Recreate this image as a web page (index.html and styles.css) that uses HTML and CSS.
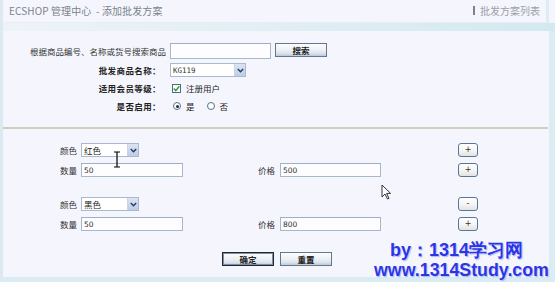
FILE: index.html
```html
<!DOCTYPE html>
<html lang="zh">
<head>
<meta charset="utf-8">
<title>ECSHOP 管理中心 - 添加批发方案</title>
<link rel="stylesheet" href="styles.css">
</head>
<body>
<div class="wrap">
  <div class="header">
    <span class="title">ECSHOP 管理中心&nbsp; - 添加批发方案</span>
    <span class="action"><i class="sep"></i>批发方案列表</span>
  </div>
  <div class="band"></div>
  <div class="main">
    <div class="form-top">
      <div class="lbl">根据商品编号、名称或货号搜索商品</div>
      <div class="ctl"><input class="txt search-input" type="text" value=""><button class="btn search">搜索</button></div>

      <div class="lbl b">批发商品名称：</div>
      <div class="ctl"><div class="sel w76"><span class="sel-val mono">KG119</span><span class="arr"><svg width="7" height="5" viewBox="0 0 7 5"><path d="M0.8 1 L3.5 3.8 L6.2 1" fill="none" stroke="#2a3a5a" stroke-width="1.4"/></svg></span></div></div>

      <div class="lbl b">适用会员等级：</div>
      <div class="ctl"><span class="chk"><svg width="7" height="7" viewBox="0 0 7 7"><path d="M0.8 3.6 L2.8 5.6 L6.3 1.2" fill="none" stroke="#21a021" stroke-width="1.4"/></svg></span><span class="opt">注册用户</span></div>

      <div class="lbl b">是否启用：</div>
      <div class="ctl"><span class="radio on"></span><span class="opt">是</span><span class="radio"></span><span class="opt">否</span></div>
    </div>

    <div class="divider"></div>

    <div class="group">
      <div class="row">
        <span class="flbl">颜色</span>
        <div class="sel w58"><span class="sel-val">红色</span><span class="arr"><svg width="7" height="5" viewBox="0 0 7 5"><path d="M0.8 1 L3.5 3.8 L6.2 1" fill="none" stroke="#2a3a5a" stroke-width="1.4"/></svg></span></div>
        <button class="mini c7">+</button>
      </div>
      <div class="row">
        <span class="flbl">数量</span>
        <input class="txt field" type="text" value="50">
        <span class="flbl c4">价格</span>
        <input class="txt field c5" type="text" value="500">
        <button class="mini c7">+</button>
      </div>
    </div>

    <div class="group">
      <div class="row">
        <span class="flbl">颜色</span>
        <div class="sel w58"><span class="sel-val">黑色</span><span class="arr"><svg width="7" height="5" viewBox="0 0 7 5"><path d="M0.8 1 L3.5 3.8 L6.2 1" fill="none" stroke="#2a3a5a" stroke-width="1.4"/></svg></span></div>
        <button class="mini c7">-</button>
      </div>
      <div class="row">
        <span class="flbl">数量</span>
        <input class="txt field" type="text" value="50">
        <span class="flbl c4">价格</span>
        <input class="txt field c5" type="text" value="800">
        <button class="mini c7">+</button>
      </div>
    </div>

    <div class="actions">
      <button class="btn big primary">确定</button>
      <button class="btn big">重置</button>
    </div>
  </div>

  <div class="watermark">
    <div class="wm1">by：1314学习网</div>
    <div class="wm2">www.1314Study.com</div>
  </div>

  <svg class="cursor-ibeam" width="8" height="17" viewBox="0 0 8 17"><path d="M1 1 H7 M4 1 V16 M1 16 H7" fill="none" stroke="#000" stroke-width="1.2"/></svg>
  <svg class="cursor-arrow" width="11" height="16" viewBox="0 0 11 16"><path d="M1 1 L1 13 L4 10 L6.5 15 L8 14.3 L5.6 9.4 L9.6 9.4 Z" fill="#fff" stroke="#333" stroke-width="1"/></svg>
</div>
</body>
</html>
```

FILE: styles.css
```css
* { box-sizing: border-box; }
html, body { margin: 0; padding: 0; }
body {
  width: 555px;
  height: 282px;
  overflow: hidden;
  background: #f5f6fd;
  font-family: "Noto Sans CJK SC", "Liberation Sans", sans-serif;
  font-size: 8.5px;
  color: #222;
}
.wrap {
  position: relative;
  width: 555px;
  height: 282px;
  display: flex;
  flex-direction: column;
}
.header {
  height: 23px;
  margin-right: 6px;
  border-left: 3px solid #dce9f0;
  border-right: 3px solid #dfecf2;
  border-bottom: 1px solid #e4eef3;
  display: flex;
  align-items: center;
  justify-content: space-between;
  padding: 0 6px 2px 6px;
  color: #7b838d;
  font-size: 10px;
}
.title { letter-spacing: 0.1px; }
.action { display: flex; align-items: center; color: #9aa0a8; }
.sep {
  display: inline-block;
  width: 2px;
  height: 9px;
  background: #7d8288;
  margin-right: 5px;
}
.band {
  height: 8px;
  border-left: 3px solid #dce9f0;
  background: linear-gradient(to right, #eef3f8 0%, #e2eff4 45%, #d3e9f0 100%);
}
.main {
  flex: 1;
  border-left: 3px solid #dbe9f0;
  border-right: 6px solid #dbedf3;
  border-bottom: 5px solid #d9ecf3;
  display: flex;
  flex-direction: column;
}
.form-top {
  display: grid;
  grid-template-columns: 163px auto;
  grid-template-rows: 16px 14px 14px 14px;
  column-gap: 4px;
  row-gap: 4px;
  padding-top: 12px;
  align-items: center;
}
.lbl { text-align: right; white-space: nowrap; color: #333; }
.lbl.b { font-weight: bold; color: #222; padding-right: 5px; letter-spacing: 0.4px; }
.ctl { display: flex; align-items: center; height: 100%; }
.txt {
  border: 1px solid #a7b8c8;
  border-top-color: #9fb0c2;
  background: #fdfdff;
  font-family: "DejaVu Sans", "Liberation Sans", sans-serif;
  font-size: 7.5px;
  color: #333;
  padding: 0 2px;
  margin: 0;
  outline: none;
}
.search-input { width: 101px; height: 16px; }
.btn {
  border: 1px solid #67778a;
  background: linear-gradient(#fbfcfd 0%, #eef1f5 50%, #d9e1ec 80%, #b9c8da 100%);
  font-family: "Noto Sans CJK SC", sans-serif;
  font-weight: bold;
  font-size: 8.5px;
  color: #222;
  padding: 0;
  margin: 0;
  line-height: 12px;
}
.btn.search { width: 52px; height: 14px; margin-left: 4px; margin-top: -2px; }
.sel {
  display: flex;
  align-items: center;
  height: 14px;
  border: 1px solid #a9bacb;
  background: #fff;
  padding-left: 2px;
  font-size: 8.5px;
  color: #222;
}
.w76 { width: 76px; }
.w58 { width: 58px; }
.sel-val { flex: 1; white-space: nowrap; }
.mono { font-family: "DejaVu Sans Mono", "Liberation Mono", monospace; font-size: 7.5px; color: #333; }
.arr {
  width: 11px;
  height: 12px;
  background: linear-gradient(#dbe4f3, #bccde6);
  border-left: 1px solid #c9d5e6;
  display: flex;
  align-items: center;
  justify-content: center;
}
.chk {
  width: 9px;
  height: 9px;
  border: 1px solid #4d6a86;
  background: #fff;
  margin-left: 2px;
  display: flex;
  align-items: center;
  justify-content: center;
}
.radio {
  width: 8px;
  height: 8px;
  border: 1px solid #55708a;
  border-radius: 50%;
  background: #fff;
  margin-left: 3px;
  position: relative;
}
.radio.on::after {
  content: "";
  position: absolute;
  left: 1.5px;
  top: 1.5px;
  width: 3px;
  height: 3px;
  border-radius: 50%;
  background: #1d2b3a;
}
.opt { margin-left: 5px; margin-right: 8px; color: #222; }
.radio + .opt { margin-right: 9px; }
.divider {
  height: 2px;
  background: #cfcfc0;
  margin: 14px 1px 0 0;
}
.group {
  display: flex;
  flex-direction: column;
  gap: 6px;
  padding-left: 57px;
  margin-top: 14px;
}
.group + .group { margin-top: 20px; }
.row {
  display: grid;
  grid-template-columns: 21px 102px 75px 22px 101px 77px 20px;
  height: 14px;
  align-items: center;
}
.flbl { color: #333; white-space: nowrap; }
.c4 { grid-column: 4; }
.c5 { grid-column: 5; }
.c7 { grid-column: 7; }
.field { width: 102px; height: 14px; }
.field.c5 { width: 101px; }
.mini {
  width: 20px;
  height: 14px;
  border: 1px solid #56779a;
  border-radius: 3px;
  background: linear-gradient(#ffffff 0%, #f4f4f4 55%, #e2e2e2 100%);
  font-family: "DejaVu Sans", sans-serif;
  font-size: 8px;
  line-height: 10px;
  color: #333;
  padding: 0;
  margin: 0;
}
.actions {
  display: flex;
  gap: 6px;
  margin-top: 21px;
  padding-left: 219px;
}
.btn.big { width: 52px; height: 14px; }
.btn.primary { border: 1px solid #1f2733; box-shadow: inset 0 0 0 1px #8090a4; }
.watermark {
  position: absolute;
  left: 374px;
  top: 240px;
  font-family: "Liberation Sans", Arial, sans-serif;
  font-weight: bold;
  color: #2a36e6;
  text-shadow: 0 0 2px #fff, 1px 1px 1px #9aa2f0;
}
.wm1 { font-size: 18px; line-height: 20px; padding-left: 16px; }
.wm2 { font-size: 17.8px; line-height: 20px; }
.cursor-ibeam { position: absolute; left: 113px; top: 151px; }
.cursor-arrow { position: absolute; left: 381px; top: 184px; }
```
